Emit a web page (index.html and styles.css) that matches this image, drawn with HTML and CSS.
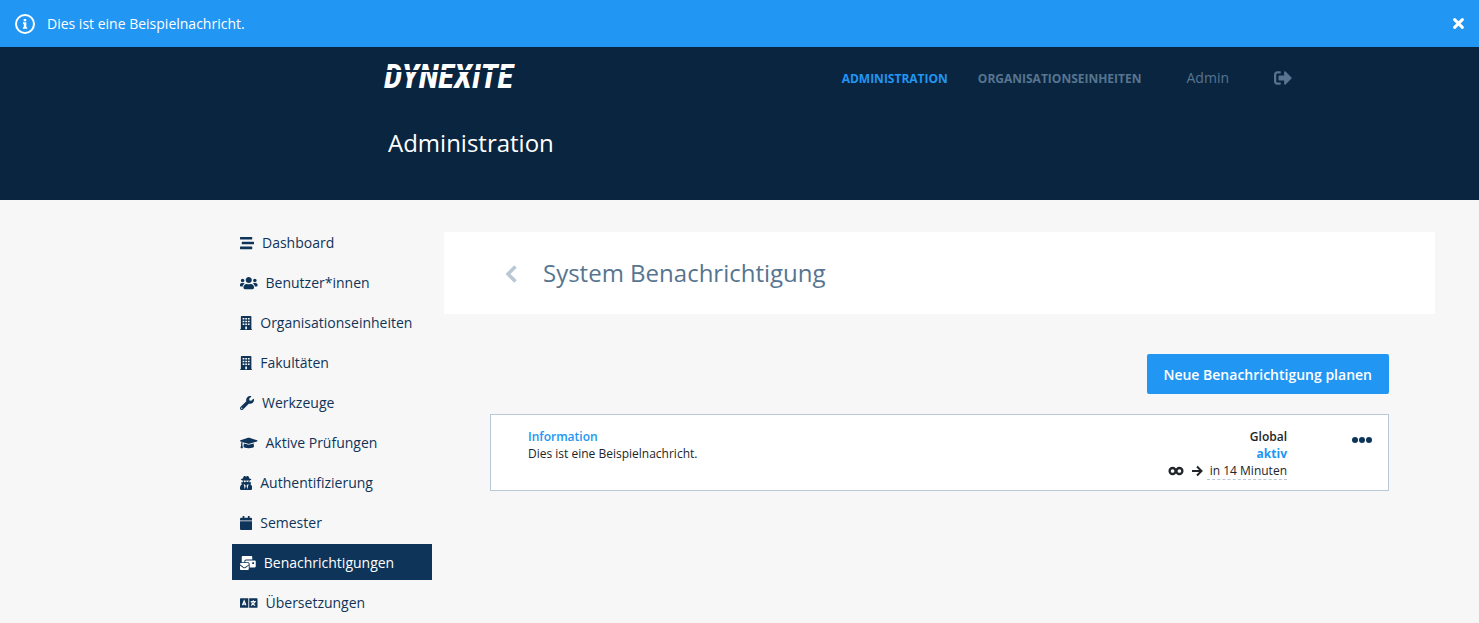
FILE: index.html
```html
<!DOCTYPE html>
<html lang="de">
<head>
<meta charset="utf-8">
<title>System Benachrichtigung – Dynexite</title>
<link rel="stylesheet" href="styles.css">
</head>
<body>
<div class="notice" role="status">
  <svg class="notice-icon" viewBox="0 0 20 20" aria-hidden="true"><circle cx="10" cy="10" r="9" fill="none" stroke="currentColor" stroke-width="2"/><path fill="currentColor" d="M8.700 5h2.500v2.200h-2.500zM8 8.300h3.300v4.900h.9v1.600H7.900v-1.600h.9V9.900H8z"/></svg>
  <span class="notice-text">Dies ist eine Beispielnachricht.</span>
  <button class="notice-close" type="button" aria-label="Schließen"><svg viewBox="0 0 10 10" aria-hidden="true"><path d="M1.500 1.500l7 7M8.500 1.500l-7 7" stroke="currentColor" stroke-width="2.700" stroke-linecap="round"/></svg></button>
</div>

<header class="header">
  <div class="topbar">
    <a class="logo" href="#">DYNEXITE</a>
    <nav class="topnav" aria-label="Hauptnavigation">
      <a class="toplink active" href="#">ADMINISTRATION</a>
      <a class="toplink" href="#">ORGANISATIONSEINHEITEN</a>
      <a class="user" href="#">Admin</a>
      <a class="logout" href="#" aria-label="Abmelden"><svg viewBox="0 0 512 512" aria-hidden="true"><path fill="currentColor" d="M497 273L329 441c-15 15-41 4.500-41-17v-96H152c-13.300 0-24-10.700-24-24v-96c0-13.300 10.700-24 24-24h136V88c0-21.400 25.900-32 41-17l168 168c9.300 9.400 9.300 24.600 0 34zM192 436v-40c0-6.600-5.400-12-12-12H96c-17.700 0-32-14.300-32-32V160c0-17.700 14.300-32 32-32h84c6.600 0 12-5.400 12-12V76c0-6.600-5.400-12-12-12H96c-53 0-96 43-96 96v192c0 53 43 96 96 96h84c6.600 0 12-5.400 12-12z"/></svg></a>
    </nav>
  </div>
  <p class="area-title">Administration</p>
</header>

<div class="layout">
  <nav class="sidebar" aria-label="Administration">
    <a class="item" href="#"><svg viewBox="0 0 512 512" aria-hidden="true"><path d="M16 128h416c9 0 16-7 16-16V48c0-9-7-16-16-16H16C7 32 0 39 0 48v64c0 9 7 16 16 16zm480 80H80c-9 0-16 7-16 16v64c0 9 7 16 16 16h416c9 0 16-7 16-16v-64c0-9-7-16-16-16zm-64 176H16c-9 0-16 7-16 16v64c0 9 7 16 16 16h416c9 0 16-7 16-16v-64c0-9-7-16-16-16z"/></svg>Dashboard</a>
    <a class="item" href="#"><svg viewBox="0 0 640 512" aria-hidden="true"><path d="M96 224c35.300 0 64-28.700 64-64s-28.700-64-64-64-64 28.700-64 64 28.700 64 64 64zm448 0c35.300 0 64-28.700 64-64s-28.700-64-64-64-64 28.700-64 64 28.700 64 64 64zm32 32h-64c-17.600 0-33.500 7.100-45.100 18.600 40.300 22.100 68.900 62 75.100 109.400h66c17.700 0 32-14.300 32-32v-32c0-35.300-28.700-64-64-64zm-256 0c61.900 0 112-50.100 112-112S381.900 32 320 32 208 82.100 208 144s50.100 112 112 112zm76.800 32h-8.300c-20.800 10-43.900 16-68.500 16s-47.600-6-68.500-16h-8.300C179.600 288 128 339.600 128 403.200V432c0 26.500 21.500 48 48 48h288c26.500 0 48-21.500 48-48v-28.800c0-63.600-51.600-115.200-115.200-115.200zm-223.700-13.400C161.500 263.100 145.600 256 128 256H64c-35.300 0-64 28.700-64 64v32c0 17.700 14.300 32 32 32h65.900c6.300-47.400 34.900-87.300 75.200-109.400z"/></svg>Benutzer*innen</a>
    <a class="item" href="#"><svg viewBox="0 0 448 512" aria-hidden="true"><path fill-rule="evenodd" d="M436 480h-20V24c0-13-11-24-24-24H56C43 0 32 11 32 24v456H12c-7 0-12 5-12 12v20h448v-20c0-7-5-12-12-12zM96 70h64v58H96zM192 70h64v58h-64zM288 70h64v58h-64zM96 170h64v58H96zM192 170h64v58h-64zM288 170h64v58h-64zM96 270h64v58H96zM192 270h64v58h-64zM288 270h64v58h-64zM192 384h64v96h-64z"/></svg>Organisationseinheiten</a>
    <a class="item" href="#"><svg viewBox="0 0 448 512" aria-hidden="true"><path fill-rule="evenodd" d="M436 480h-20V24c0-13-11-24-24-24H56C43 0 32 11 32 24v456H12c-7 0-12 5-12 12v20h448v-20c0-7-5-12-12-12zM96 70h64v58H96zM192 70h64v58h-64zM288 70h64v58h-64zM96 170h64v58H96zM192 170h64v58h-64zM288 170h64v58h-64zM96 270h64v58H96zM192 270h64v58h-64zM288 270h64v58h-64zM192 384h64v96h-64z"/></svg>Fakultäten</a>
    <a class="item" href="#"><svg viewBox="0 0 512 512" aria-hidden="true"><path d="M507.730 109.100c-2.240-9.030-13.540-12.090-20.120-5.510l-74.360 74.360-67.880-11.310-11.310-67.880 74.360-74.360c6.620-6.620 3.430-17.900-5.660-20.160-47.380-11.740-99.550.91-136.580 37.930-39.640 39.640-50.550 97.100-34.050 147.200L18.740 402.760c-24.990 24.990-24.990 65.510 0 90.500 24.990 24.990 65.510 24.990 90.500 0l213.210-213.210c50.120 16.710 107.470 5.680 147.370-34.220 37.070-37.070 49.700-89.320 37.910-136.730zM64 472c-13.250 0-24-10.750-24-24 0-13.260 10.750-24 24-24s24 10.740 24 24c0 13.250-10.750 24-24 24z"/></svg>Werkzeuge</a>
    <a class="item" href="#"><svg viewBox="0 0 640 512" aria-hidden="true"><path d="M622.340 153.200L343.400 67.500c-15.200-4.670-31.600-4.670-46.790 0L17.660 153.200c-23.540 7.230-23.540 38.360 0 45.590l48.630 14.940c-10.670 13.190-17.230 29.280-17.880 46.900C38.780 266.150 32 276.110 32 288c0 10.780 5.680 19.850 13.860 25.650L20.330 428.530C18.110 438.520 25.710 448 35.940 448h56.110c10.240 0 17.840-9.480 15.620-19.470L82.140 313.650C90.320 307.850 96 298.780 96 288c0-11.570-6.470-21.250-15.660-26.870.76-15.020 8.440-28.300 20.690-36.720L296.600 284.500c9.060 2.780 26.440 6.250 46.790 0l278.950-85.700c23.550-7.240 23.550-38.360 0-45.600zM352.790 315.090c-28.530 8.760-52.840 3.920-65.590 0l-145.020-44.550L128 384c0 35.350 85.960 64 192 64s192-28.650 192-64l-14.180-113.470-145.030 44.560z"/></svg>Aktive Prüfungen</a>
    <a class="item" href="#"><svg viewBox="0 0 448 512" aria-hidden="true"><path d="M383.900 308.300l23.900-62.600c4-10.500-3.700-21.700-15-21.700h-58.500c11-18.900 17.800-40.600 17.800-64v-.3c39.200-7.800 64-19.100 64-31.700 0-13.300-27.300-25.100-70.100-33-9.200-32.800-27-65.800-40.600-82.800-9.500-11.900-25.900-15.600-39.500-8.800l-27.600 13.800c-9 4.500-19.600 4.500-28.600 0L182.100 3.400c-13.600-6.800-30-3.100-39.500 8.800-13.500 17-31.400 50-40.600 82.800-42.700 7.900-70 19.700-70 33 0 12.600 24.800 23.900 64 31.700v.3c0 23.400 6.800 45.100 17.800 64H56.300c-11.500 0-19.200 11.700-14.700 22.300l25.800 60.200C27.300 329.800 0 372.700 0 422.400v44.800C0 491.900 20.100 512 44.800 512h358.400c24.700 0 44.800-20.100 44.800-44.800v-44.800c0-48.400-25.800-90.400-64.100-114.100zM176 480l-41.600-192 49.600 32 24 40-32 120zm96 0l-32-120 24-40 49.600-32L272 480zm41.700-298.500c-3.900 11.900-7 24.600-16.500 33.400-10.100 9.300-48 22.400-64-25-2.800-8.400-15.400-8.400-18.300 0-17 50.200-56 32.400-64 25-9.500-8.800-12.700-21.500-16.500-33.400-.8-2.500-6.300-5.700-6.300-5.800v-10.800c28.300 3.600 61 5.800 96 5.800s67.700-2.100 96-5.800v10.800c-.1.1-5.600 3.200-6.400 5.800z"/></svg>Authentifizierung</a>
    <a class="item" href="#"><svg viewBox="0 0 448 512" aria-hidden="true"><path d="M12 192h424c6.600 0 12 5.400 12 12v260c0 26.500-21.500 48-48 48H48c-26.500 0-48-21.500-48-48V204c0-6.600 5.400-12 12-12zm436-44v-36c0-26.500-21.500-48-48-48h-48V12c0-6.600-5.400-12-12-12h-40c-6.600 0-12 5.400-12 12v52H160V12c0-6.600-5.400-12-12-12h-40c-6.600 0-12 5.400-12 12v52H48C21.500 64 0 85.500 0 112v36c0 6.600 5.400 12 12 12h424c6.600 0 12-5.400 12-12z"/></svg>Semester</a>
    <a class="item selected" href="#" aria-current="page"><svg viewBox="0 0 576 512" aria-hidden="true"><path d="M160 448c-25.600 0-51.200-22.400-64-32-64-44.800-83.200-60.800-96-70.400V480c0 17.670 14.330 32 32 32h256c17.670 0 32-14.330 32-32V345.600c-12.800 9.600-32 25.600-96 70.400-12.800 9.600-38.400 32-64 32zm128-192H32c-17.670 0-32 14.330-32 32v16c25.600 19.200 22.400 19.200 115.200 86.400 9.600 6.400 28.800 25.600 44.800 25.600s35.200-19.200 44.800-22.400c92.800-67.200 89.600-67.200 115.200-86.400V288c0-17.670-14.330-32-32-32zm256-96H224c-17.670 0-32 14.330-32 32v32h96c33.210 0 60.590 25.420 63.710 57.820l.29-.22V416h192c17.670 0 32-14.330 32-32V192c0-17.670-14.330-32-32-32zm-32 128h-64v-64h64v64zm-352-96c0-35.290 28.710-64 64-64h224V32c0-17.670-14.330-32-32-32H96C78.330 0 64 14.330 64 32v192h96v-32z"/></svg>Benachrichtigungen</a>
    <a class="item" href="#"><svg viewBox="0 0 640 512" aria-hidden="true"><path fill-rule="evenodd" d="M24 80h280v352H24c-13 0-24-11-24-24V104c0-13 11-24 24-24zm312 0h280c13 0 24 11 24 24v304c0 13-11 24-24 24H336z"/><g fill="none" stroke="#f7f7f7" stroke-width="44"><path d="M90 340l62-160 62 160M112 294h80"/><path d="M392 204h188M486 152v52M540 210c-20 66-70 108-134 134M424 240c30 54 76 86 132 106"/></g></svg>Übersetzungen</a>
  </nav>

  <main class="content">
    <div class="page-head">
      <a class="back" href="#" aria-label="Zurück"><svg viewBox="0 0 12 18" aria-hidden="true"><path d="M10.500 1.500L3 9l7.500 7.500" fill="none" stroke="currentColor" stroke-width="3.500"/></svg></a>
      <h1 class="page-title">System Benachrichtigung</h1>
    </div>
    <div class="page-body">
      <button class="primary" type="button">Neue Benachrichtigung planen</button>
      <article class="card">
        <div class="message">
          <h2 class="kind">Information</h2>
          <p class="line">Dies ist eine Beispielnachricht.</p>
        </div>
        <div class="meta">
          <p class="scope">Global</p>
          <p class="state">aktiv</p>
          <p class="period">
            <svg class="infinity" viewBox="0 0 16 10" aria-hidden="true"><g fill="none" stroke="currentColor" stroke-width="2.300"><circle cx="4.600" cy="5" r="3"/><circle cx="11.400" cy="5" r="3"/></g></svg>
            <svg class="arrow" viewBox="0 0 12 12" aria-hidden="true"><path d="M1 6h9M6 1.500L10.500 6 6 10.500" fill="none" stroke="currentColor" stroke-width="2"/></svg>
            <span class="until">in 14 Minuten</span>
          </p>
        </div>
        <button class="more" type="button" aria-label="Weitere Aktionen"><svg viewBox="0 0 20 6" aria-hidden="true"><g fill="currentColor"><circle cx="3" cy="3" r="3"/><circle cx="10" cy="3" r="3"/><circle cx="17" cy="3" r="3"/></g></svg></button>
      </article>
    </div>
  </main>
</div>
</body>
</html>
```
FILE: styles.css
```css
* { box-sizing: border-box; }

body {
  margin: 0;
  background: #f7f7f7;
  color: #212529;
  font-family: "Open Sans", "Noto Sans", sans-serif;
  font-size: 14px;
  line-height: 20px;
}

a { color: inherit; text-decoration: none; }
h1, h2, p { margin: 0; font-weight: 400; }
svg { display: block; flex: none; }
button { border: 0; padding: 0; background: none; color: inherit; font: inherit; cursor: pointer; }

.notice {
  display: flex;
  align-items: center;
  gap: 12px;
  height: 47px;
  padding: 0 15px;
  background: #2196f3;
  color: #fff;
}
.notice-icon { width: 20px; height: 20px; }
.notice-close { margin-left: auto; }
.notice-close svg { width: 11px; height: 11px; }

.header {
  min-height: 153px;
  padding: 16px 187px 0 384px;
  background: #0a2540;
  color: #fff;
}
.topbar { display: flex; align-items: center; justify-content: space-between; height: 30px; }
.logo {
  position: relative;
  padding-bottom: 2px;
  font-family: "Roboto Condensed", "Liberation Sans Narrow", "Liberation Sans", sans-serif;
  font-size: 33px;
  font-style: italic;
  font-weight: 700;
  line-height: 28px;
}
.logo::after {
  content: "";
  position: absolute;
  inset: 7px 0 auto;
  height: 2px;
  background: #0a2540;
}
.topnav { display: flex; align-items: center; color: #577590; }
.toplink { margin-right: 30px; padding-top: 2px; font-size: 12px; font-weight: 700; }
.toplink.active { color: #2196f3; }
.user { margin: 0 45px 0 15px; }
.logout svg { width: 18px; height: 18px; }
.area-title { padding: 32px 4px 0; font-size: 24px; line-height: 36px; }

.layout {
  display: grid;
  grid-template-columns: 200px minmax(0, 1fr);
  gap: 12px;
  padding: 24px 44px 0 232px;
}

.sidebar { display: flex; flex-direction: column; gap: 4px; color: #0f3459; }
.item { display: flex; align-items: center; gap: 8px; height: 36px; padding: 2px 8px 0; }
.item svg { height: 14px; fill: currentColor; }
.item.selected { background: #0f3459; color: #fff; }

.content { padding-top: 8px; }
.page-head { display: flex; align-items: center; gap: 26px; padding: 23px 61px; background: #fff; }
.back { padding-top: 2px; color: #bac7d5; }
.back svg { width: 12px; height: 18px; }
.page-title { color: #577590; font-size: 24px; line-height: 36px; }

.page-body { display: flex; flex-direction: column; gap: 20px; padding: 40px 46px 0; }
.primary {
  align-self: flex-end;
  height: 40px;
  padding: 2px 17px 0 16px;
  border-radius: 2px;
  background: #2196f3;
  color: #fff;
  font-weight: 600;
}
.card {
  display: flex;
  align-items: flex-start;
  padding: 13px 16px 10px 37px;
  border: 1px solid #bac7d5;
  background: #fff;
  font-size: 12px;
  line-height: 17px;
}
.message { flex: 1; }
.kind { color: #2196f3; font-size: 12px; font-weight: 600; }
.meta { text-align: right; }
.scope { font-weight: 600; }
.state { color: #2196f3; font-weight: 700; }
.period { display: flex; align-items: center; justify-content: flex-end; }
.infinity { width: 16px; height: 10px; margin-right: 7px; }
.arrow { width: 12px; height: 12px; margin-right: 4px; }
.until { padding-left: 3px; border-bottom: 1px dashed #bac7d5; }
.more { margin: 9px 0 0 65px; color: #0f3459; }
.more svg { width: 20px; height: 6px; }
```
